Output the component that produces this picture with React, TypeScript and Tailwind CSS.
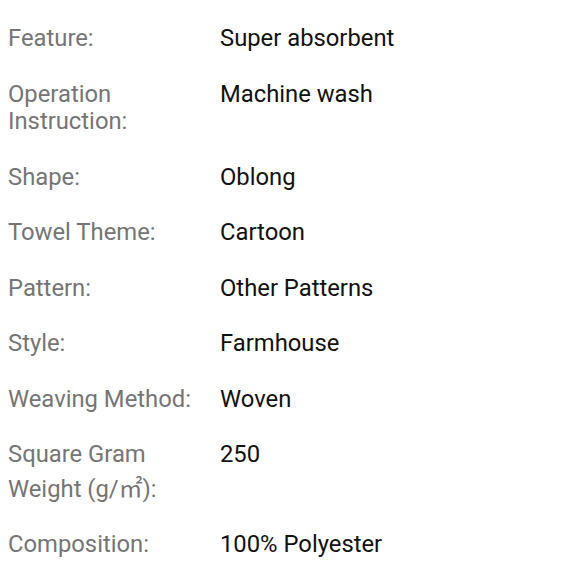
import React from "react";

const rows: [React.ReactNode, string, string][] = [
  ["Feature:", "Super absorbent", "a"],
  ["Operation Instruction:", "Machine wash", "b"],
  ["Shape:", "Oblong", "c"],
  ["Towel Theme:", "Cartoon", "d"],
  ["Pattern:", "Other Patterns", "e"],
  ["Style:", "Farmhouse", "f"],
  ["Weaving Method:", "Woven", "g"],
  [
    <>
      <span className="block">Square Gram</span>
      <span className="block pt-[7px]">Weight (g/㎡):</span>
    </>,
    "250",
    "h",
  ],
  ["Composition:", "100% Polyester", "i"],
];

export default function App() {
  return (
    <div
      className="w-[580px] h-[580px] bg-white pt-[11px] pl-[8px] overflow-hidden"
      style={{ fontFamily: 'Roboto, "Noto Sans CJK SC", sans-serif' }}
    >
      {rows.map(([k, v, id]) => (
        <div key={id} className="grid grid-cols-[212px_1fr] py-[14px] text-[23.8px] leading-[27.5px]">
          <div className="text-[#757575] pr-[10px]">{k}</div>
          <div className="text-[#111111]">{v}</div>
        </div>
      ))}
    </div>
  );
}
